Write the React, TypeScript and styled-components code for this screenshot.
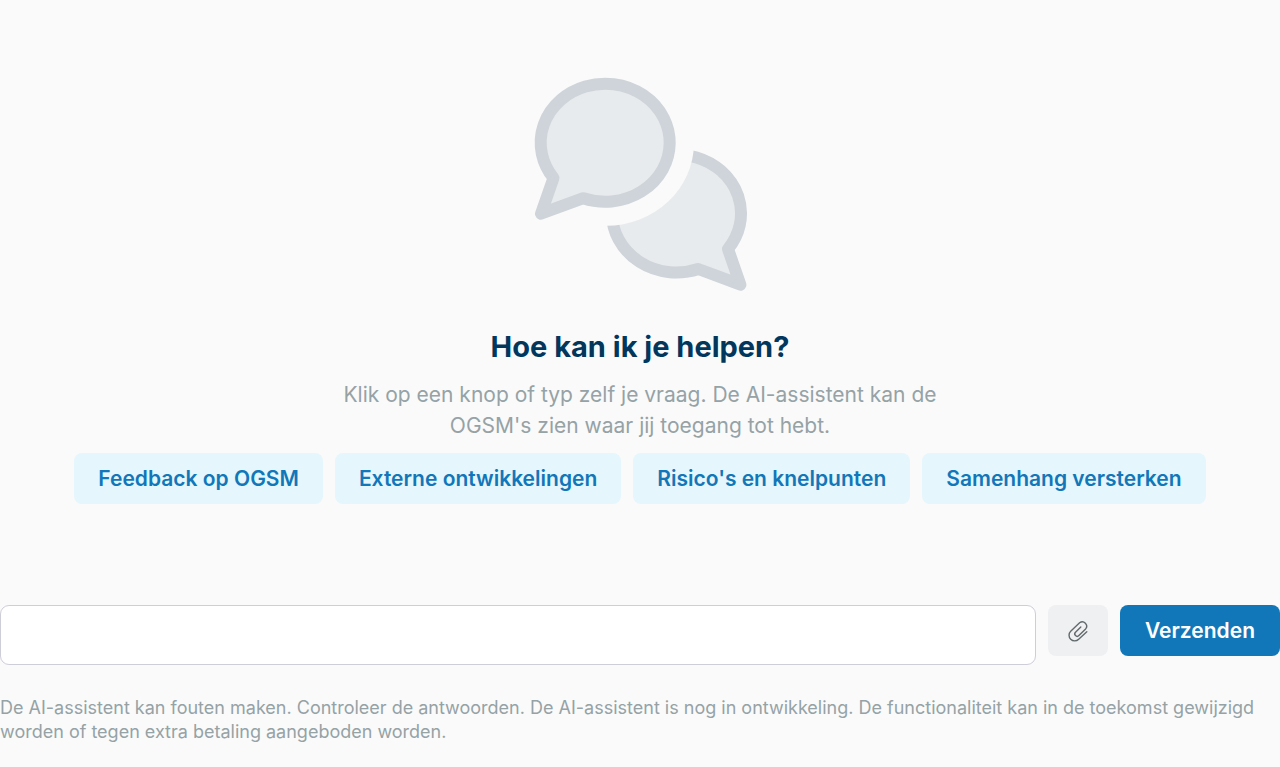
import React from "react";
import styled, { createGlobalStyle } from "styled-components";

const color = {
  page: "#fafafa",
  navy: "#01375d",
  blue: "#1277b9",
  paleBlue: "#e5f6fc",
  muted: "#95a2a6",
  line: "#cdced8",
  grey: "#eff0f2",
  bubble: "#e8ebed",
  bubbleLine: "#ced4d9",
};

const GlobalStyle = createGlobalStyle`
  *, *::before, *::after { box-sizing: border-box; }
  body {
    margin: 0;
    background: ${color.page};
    font-family: Inter, "Liberation Sans", sans-serif;
  }
`;

const Page = styled.main`
  display: flex;
  flex-direction: column;
`;

const Intro = styled.section`
  display: flex;
  flex-direction: column;
  align-items: center;
  padding-top: 76px;
  text-align: center;
`;

const Illustration = styled.svg`
  display: block;
  width: 216px;
  height: 216px;
`;

const Title = styled.h1`
  margin: 36px 0 0;
  color: ${color.navy};
  font-size: 29px;
  font-weight: 700;
  line-height: 38px;
`;

const Lead = styled.p`
  max-width: 600px;
  margin: 13px 0 0;
  color: ${color.muted};
  font-size: 21px;
  line-height: 31px;
`;

const Suggestions = styled.div`
  display: flex;
  flex-wrap: wrap;
  justify-content: center;
  gap: 12px;
  margin-top: 12px;
`;

const buttonTones = {
  suggestion: { background: color.paleBlue, text: color.blue, padding: 24 },
  quiet: { background: color.grey, text: "#62696c", padding: 18 },
  primary: { background: color.blue, text: "#ffffff", padding: 25 },
};

const Button = styled.button<{ $tone: keyof typeof buttonTones }>`
  display: inline-flex;
  flex: none;
  align-items: center;
  justify-content: center;
  height: 51px;
  padding: 0 ${(p) => buttonTones[p.$tone].padding}px;
  border: 0;
  border-radius: 8px;
  background: ${(p) => buttonTones[p.$tone].background};
  color: ${(p) => buttonTones[p.$tone].text};
  font-family: inherit;
  font-size: 21px;
  font-weight: 600;
  line-height: 31px;
  cursor: pointer;
`;

const Composer = styled.form`
  display: flex;
  align-items: flex-start;
  gap: 12px;
  margin-top: 101px;
`;

const Message = styled.textarea`
  flex: 1;
  min-width: 0;
  height: 60px;
  padding: 12px 16px;
  border: 1px solid ${color.line};
  border-radius: 9px;
  background: #ffffff;
  color: ${color.navy};
  font-family: inherit;
  font-size: 21px;
  line-height: 31px;
  resize: none;
`;

const Disclaimer = styled.p`
  margin: 31px 0 0;
  padding-bottom: 24px;
  color: ${color.muted};
  font-size: 18px;
  line-height: 24px;
`;

const suggestions = [
  "Feedback op OGSM",
  "Externe ontwikkelingen",
  "Risico's en knelpunten",
  "Samenhang versterken",
];

const ChatBubbles = () => (
  <Illustration viewBox="12 16 216 216" aria-hidden="true">
    <g fill={color.bubble} stroke={color.bubbleLine} strokeWidth="12" strokeLinejoin="round">
      <path d="M208 189A64.5 59 0 1 0 178.3 209L220.4 224.7Z" />
      <ellipse cx="86" cy="82.8" rx="88" ry="83" fill={color.page} stroke="none" />
      <path d="M33.5 118A64.5 59 0 1 1 63.3 138.2L21 153.7Z" />
    </g>
  </Illustration>
);

const Paperclip = () => (
  <svg width="24" height="24" viewBox="0 0 24 24" fill="none" stroke="currentColor" strokeWidth="1.4" strokeLinecap="round" strokeLinejoin="round" aria-hidden="true">
    <path d="M20.8 12.8L12.7 20.2A5.6 5.6 0 0 1 4.7 12.2L13.6 3.8A4.3 4.3 0 0 1 19.6 9.9L12.9 16.6A2.4 2.4 0 0 1 9.5 13.2L14.8 8.1" />
  </svg>
);

export default function App() {
  return (
    <Page>
      <GlobalStyle />
      <Intro>
        <ChatBubbles />
        <Title>Hoe kan ik je helpen?</Title>
        <Lead>
          Klik op een knop of typ zelf je vraag. De AI-assistent kan de OGSM's zien waar jij
          toegang tot hebt.
        </Lead>
        <Suggestions>
          {suggestions.map((label) => (
            <Button key={label} type="button" $tone="suggestion">
              {label}
            </Button>
          ))}
        </Suggestions>
      </Intro>
      <Composer onSubmit={(e) => e.preventDefault()}>
        <Message aria-label="Je vraag" rows={1} />
        <Button type="button" $tone="quiet" aria-label="Bestand toevoegen">
          <Paperclip />
        </Button>
        <Button type="submit" $tone="primary">
          Verzenden
        </Button>
      </Composer>
      <Disclaimer>
        De AI-assistent kan fouten maken. Controleer de antwoorden. De AI-assistent is nog in
        ontwikkeling. De functionaliteit kan in de toekomst gewijzigd worden of tegen extra
        betaling aangeboden worden.
      </Disclaimer>
    </Page>
  );
}
